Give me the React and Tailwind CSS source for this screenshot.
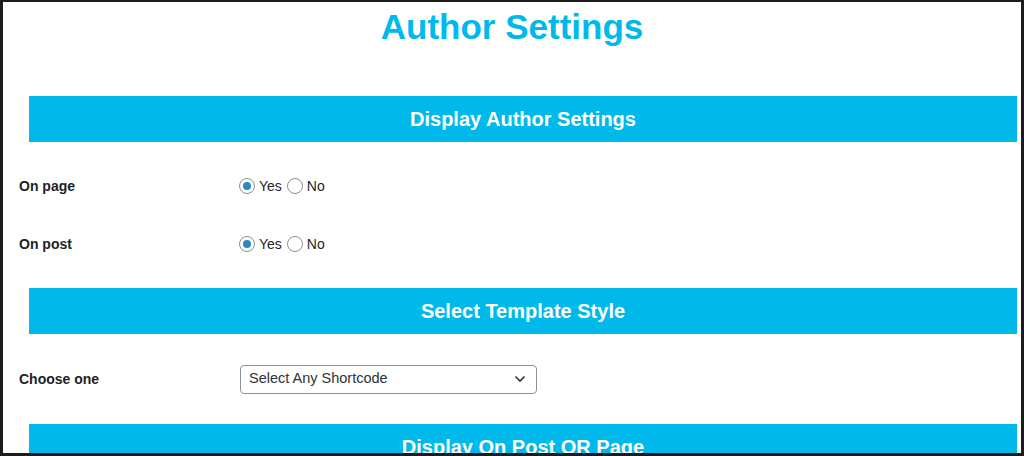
import React from "react";

const font = { fontFamily: '"Liberation Sans", Arial, sans-serif' };

function Bar({ children, className = "" }) {
  return (
    <div
      className={`ml-[26px] mr-[4px] h-[46px] shrink-0 bg-[#00b9eb] flex items-center justify-center text-white font-bold text-[20px] leading-none ${className}`}
    >
      {children}
    </div>
  );
}

function Radio({ checked }) {
  return (
    <span className="w-[16px] h-[16px] rounded-full border border-[#8c8f94] bg-white flex items-center justify-center shrink-0">
      {checked && <span className="w-[8px] h-[8px] rounded-full bg-[#2a86c4]" />}
    </span>
  );
}

function RadioRow({ label }) {
  return (
    <div className="h-[58px] shrink-0 flex items-center">
      <div className="w-[236px] shrink-0 pl-[16px] text-[14px] font-bold text-[#1d2327]">{label}</div>
      <div className="flex items-center text-[14px] text-[#1d2327]">
        <Radio checked />
        <span className="ml-[4px]">Yes</span>
        <span className="ml-[5px]"><Radio /></span>
        <span className="ml-[4px]">No</span>
      </div>
    </div>
  );
}

export default function App() {
  return (
    <div
      style={font}
      className="w-[1024px] h-[456px] overflow-hidden bg-white border-l-[3px] border-t-2 border-r-[3px] border-b-[3px] border-[#1c1c1c] flex flex-col"
    >
      <h1 className="mt-[5px] h-[40px] shrink-0 leading-[40px] text-center text-[35px] font-bold text-[#00b9eb]">
        Author Settings
      </h1>
      <div className="h-[49px] shrink-0" />
      <Bar>Display Author Settings</Bar>
      <div className="h-[15px] shrink-0" />
      <RadioRow label="On page" />
      <RadioRow label="On post" />
      <div className="h-[15px] shrink-0" />
      <Bar>Select Template Style</Bar>
      <div className="h-[16px] shrink-0" />
      <div className="h-[58px] flex items-center shrink-0">
        <div className="w-[236px] shrink-0 pl-[16px] text-[14px] font-bold text-[#1d2327]">Choose one</div>
        <div className="ml-[1px] w-[297px] h-[29px] shrink-0 border border-[#8c8f94] rounded-[4px] flex items-center justify-between pl-[8px] pr-[10px] text-[14.5px] text-[#2c3338]">
          <span>Select Any Shortcode</span>
          <svg width="12" height="8" viewBox="0 0 12 8" fill="none">
            <path d="M1.5 1.5 L6 6 L10.5 1.5" stroke="#2c3338" strokeWidth="1.6" />
          </svg>
        </div>
      </div>
      <div className="h-[16px] shrink-0" />
      <Bar>Display On Post OR Page</Bar>
    </div>
  );
}
